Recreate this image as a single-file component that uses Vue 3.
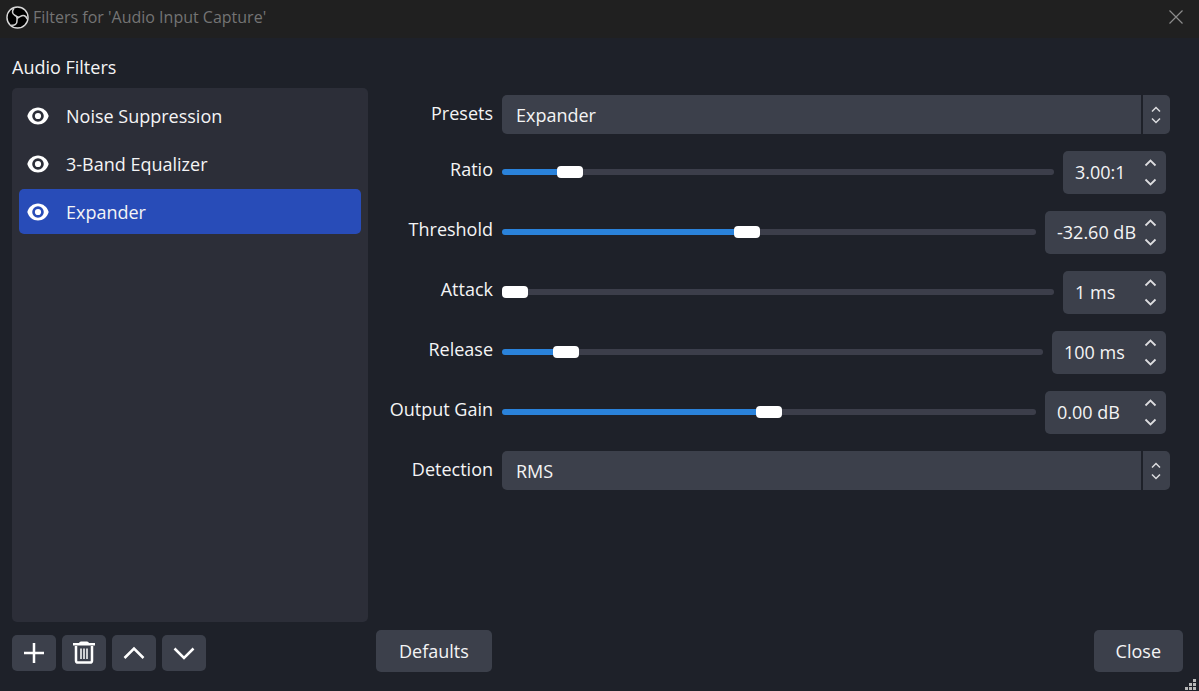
<script setup>
import { reactive, ref } from 'vue'

const filters = ['Noise Suppression', '3-Band Equalizer', 'Expander']
const selected = ref(2)
const preset = ref('Expander')
const detection = ref('RMS')

const params = reactive([
  { id: 'ratio', label: 'Ratio', min: 1, max: 20, step: 0.01, value: 3, digits: 2, unit: ':1', size: 'small' },
  { id: 'threshold', label: 'Threshold', min: -60, max: 0, step: 0.1, value: -32.6, digits: 2, unit: ' dB', size: 'large' },
  { id: 'attack', label: 'Attack', min: 1, max: 100, step: 1, value: 1, digits: 0, unit: ' ms', size: 'small' },
  { id: 'release', label: 'Release', min: 1, max: 1000, step: 1, value: 100, digits: 0, unit: ' ms', size: 'medium' },
  { id: 'gain', label: 'Output Gain', min: -32, max: 32, step: 0.1, value: 0, digits: 2, unit: ' dB', size: 'large' }
])

const fill = (p) => ((p.value - p.min) / (p.max - p.min)) * 100 + '%'
const shown = (p) => p.value.toFixed(p.digits) + p.unit
const bump = (p, dir) => {
  p.value = Math.min(p.max, Math.max(p.min, p.value + dir * p.step))
}
</script>

<template>
  <div class="dialog">
    <header class="titlebar">
      <svg class="logo" viewBox="0 0 24 24" aria-hidden="true">
        <circle cx="12" cy="12" r="11" fill="#000" stroke="#d8d8d8" stroke-width="1.5" />
        <g fill="none" stroke="#d0d0d0" stroke-width="1.6" stroke-linecap="round">
          <path d="M12 12C10.500 9.500 7 10 6.800 6.600C6.700 5 7.200 3.800 8 3" />
          <path d="M12 12C10.500 9.500 7 10 6.800 6.600C6.700 5 7.200 3.800 8 3" transform="rotate(120 12 12)" />
          <path d="M12 12C10.500 9.500 7 10 6.800 6.600C6.700 5 7.200 3.800 8 3" transform="rotate(240 12 12)" />
        </g>
        <circle cx="12" cy="12" r="1.4" fill="#d0d0d0" />
      </svg>
      <h1>Filters for 'Audio Input Capture'</h1>
      <button class="window-close" type="button" aria-label="Close window">
        <svg viewBox="0 0 14 14"><path d="M0.5 0.5L13.5 13.5M13.5 0.5L0.5 13.5" /></svg>
      </button>
    </header>

    <main class="body">
      <section class="side">
        <h2>Audio Filters</h2>
        <ul class="list">
          <li v-for="(name, i) in filters" :key="name">
            <button type="button" class="item" :class="{ active: i === selected }" @click="selected = i">
              <svg class="eye" viewBox="0 0 22 18" aria-hidden="true">
                <path fill-rule="evenodd" d="M11 0.500C16 0.500 20.300 4 21.700 9C20.300 14 16 17.500 11 17.500S1.700 14 0.300 9C1.700 4 6 0.500 11 0.500ZM11 3.200A5.800 5.800 0 1 0 11 14.800A5.800 5.800 0 1 0 11 3.200Z" />
                <circle cx="11" cy="9" r="3.100" />
              </svg>
              <span>{{ name }}</span>
            </button>
          </li>
        </ul>
        <div class="tools">
          <button type="button" aria-label="Add filter">
            <svg viewBox="0 0 24 24"><path class="line" d="M12 2V22M2 12H22" /></svg>
          </button>
          <button type="button" aria-label="Remove filter">
            <svg viewBox="0 0 24 24">
              <path class="solid" d="M1 2H7Q7.500 0.400 9 0.400H15Q16.500 0.400 17 2H23V4.600H1Z" />
              <path class="line" d="M4 5V19.500Q4 21.600 6 21.600H18Q20 21.600 20 19.500V5" />
              <path class="thin" d="M9 7.500V18M12 7.500V18M15 7.500V18" />
            </svg>
          </button>
          <button type="button" aria-label="Move up">
            <svg viewBox="0 0 24 24"><path class="line" d="M2.500 17L12 7.500L21.500 17" /></svg>
          </button>
          <button type="button" aria-label="Move down">
            <svg viewBox="0 0 24 24"><path class="line" d="M2.500 7.500L12 17L21.500 7.500" /></svg>
          </button>
        </div>
      </section>

      <section class="main">
        <form class="form" @submit.prevent>
          <div class="row">
            <label for="presets">Presets</label>
            <div class="select">
              <select id="presets" v-model="preset">
                <option>Expander</option>
                <option>Gate</option>
              </select>
              <svg viewBox="0 0 10 18" aria-hidden="true"><path d="M1 5.500L5 1.500L9 5.500M1 12.500L5 16.500L9 12.500" /></svg>
            </div>
          </div>

          <div v-for="p in params" :key="p.id" class="row">
            <label :for="p.id">{{ p.label }}</label>
            <div class="control">
              <input
                :id="p.id"
                v-model.number="p.value"
                class="slider"
                type="range"
                :min="p.min"
                :max="p.max"
                :step="p.step"
                :style="{ '--fill': fill(p) }"
              />
              <div class="spin" :class="p.size">
                <input type="text" :value="shown(p)" :aria-label="p.label + ' value'" />
                <div class="arrows">
                  <button type="button" :aria-label="'Increase ' + p.label" @click="bump(p, 1)">
                    <svg viewBox="0 0 12 8"><path d="M1 6.500L6 1.500L11 6.500" /></svg>
                  </button>
                  <button type="button" :aria-label="'Decrease ' + p.label" @click="bump(p, -1)">
                    <svg viewBox="0 0 12 8"><path d="M1 1.500L6 6.500L11 1.500" /></svg>
                  </button>
                </div>
              </div>
            </div>
          </div>

          <div class="row">
            <label for="detection">Detection</label>
            <div class="select">
              <select id="detection" v-model="detection">
                <option>RMS</option>
                <option>Peak</option>
              </select>
              <svg viewBox="0 0 10 18" aria-hidden="true"><path d="M1 5.500L5 1.500L9 5.500M1 12.500L5 16.500L9 12.500" /></svg>
            </div>
          </div>
        </form>

        <footer class="footer">
          <button type="button">Defaults</button>
          <button type="button">Close</button>
        </footer>
      </section>
    </main>

    <svg class="grip" viewBox="0 0 11 11" aria-hidden="true">
      <path d="M8 0h3v3h-3zM4 4h3v3h-3zM8 4h3v3h-3zM0 8h3v3h-3zM4 8h3v3h-3zM8 8h3v3h-3z" />
    </svg>
  </div>
</template>

<style>
body {
  margin: 0;
  background: #1e2129;
}
</style>

<style scoped>
.dialog {
  position: relative;
  display: flex;
  flex-direction: column;
  min-height: 100vh;
  background: #1e2129;
  color: #f4f4f5;
  font-family: "Open Sans", "Noto Sans", sans-serif;
  font-size: 18px;
  line-height: 24px;
}

.dialog * {
  box-sizing: border-box;
}

button,
input,
select {
  margin: 0;
  padding: 0;
  border: 0;
  color: inherit;
  font: inherit;
}

.titlebar {
  display: flex;
  align-items: center;
  height: 38px;
  padding: 0 16px 4px 6px;
  background: #202020;
}

.logo {
  width: 23px;
  height: 23px;
}

h1 {
  margin: 0 auto 0 4px;
  color: #747474;
  font-size: 16px;
  font-weight: 400;
}

.window-close {
  display: flex;
  background: none;
}

.window-close svg {
  width: 14px;
  height: 14px;
  fill: none;
  stroke: #8c8c8c;
  stroke-width: 1.2;
}

.body {
  flex: 1;
  display: grid;
  grid-template-columns: 356fr 807fr;
  column-gap: 8px;
  padding: 17px 16px 19px 12px;
}

.side,
.main {
  display: flex;
  flex-direction: column;
}

h2 {
  margin: 0 0 9px;
  font-size: 18px;
  font-weight: 400;
}

.list {
  flex: 1;
  display: flex;
  flex-direction: column;
  gap: 3px;
  margin: 0;
  padding: 5px 7px;
  border-radius: 5px;
  background: #2c2e38;
  list-style: none;
}

.item {
  display: flex;
  align-items: center;
  gap: 17px;
  width: 100%;
  height: 45px;
  padding-left: 8px;
  border-radius: 5px;
  background: none;
}

.item.active {
  background: #284cb8;
}

.eye {
  width: 22px;
  height: 18px;
  fill: #fff;
}

.tools {
  display: flex;
  gap: 6px;
  margin-top: 13px;
  padding-bottom: 1px;
}

.tools button {
  display: flex;
  align-items: center;
  justify-content: center;
  width: 44px;
  height: 36px;
  border-radius: 5px;
  background: #3c404b;
}

.tools svg {
  width: 24px;
  height: 24px;
}

.line,
.thin {
  fill: none;
  stroke: #fff;
  stroke-width: 2.5;
}

.thin {
  stroke-width: 1.5;
}

.solid {
  fill: #fff;
}

.form {
  flex: 1;
  display: flex;
  flex-direction: column;
  gap: 17px;
  padding: 40px 13px 0 0;
}

.row {
  display: grid;
  grid-template-columns: 117px 1fr;
  column-gap: 9px;
  align-items: start;
}

.row label {
  line-height: 37px;
  text-align: right;
}

.select {
  position: relative;
}

.select select {
  display: block;
  width: 100%;
  height: 39px;
  padding-left: 14px;
  appearance: none;
  border-radius: 5px;
  background: linear-gradient(#1e2129, #1e2129) right 27px top / 2px 100% no-repeat #3c404b;
}

.select svg {
  position: absolute;
  top: 11px;
  right: 9px;
  width: 10px;
  height: 18px;
  fill: none;
  stroke: #dcdcdf;
  stroke-width: 1.5;
  pointer-events: none;
}

.control {
  display: flex;
  align-items: start;
  gap: 9px;
  padding-right: 4px;
}

.slider {
  flex: 1;
  min-width: 0;
  height: 42px;
  appearance: none;
  background: none;
}

.slider::-webkit-slider-runnable-track {
  height: 6px;
  border-radius: 3px;
  background: linear-gradient(to right, #2a82da var(--fill), #3c3e4a var(--fill));
}

.slider::-webkit-slider-thumb {
  width: 26px;
  height: 12px;
  margin-top: -3px;
  appearance: none;
  border-radius: 4px;
  background: #fff;
}

.spin {
  display: flex;
  height: 43px;
  padding: 0 9px 0 12px;
  border-radius: 5px;
  background: #3c404b;
}

.spin.small {
  width: 103px;
}

.spin.medium {
  width: 114px;
}

.spin.large {
  width: 121px;
}

.spin input {
  flex: 1;
  width: 0;
  min-width: 0;
  padding-bottom: 1px;
  background: none;
}

.arrows {
  display: flex;
  flex-direction: column;
  justify-content: center;
  gap: 11px;
}

.arrows button {
  display: flex;
  background: none;
}

.arrows svg {
  width: 13px;
  height: 8px;
  fill: none;
  stroke: #dcdcdf;
  stroke-width: 1.8;
}

.footer {
  display: flex;
  justify-content: space-between;
}

.footer button {
  height: 42px;
  padding: 0 22px;
  border-radius: 5px;
  background: #3c404b;
}

.footer button:first-child {
  padding: 0 23px;
}

.grip {
  position: absolute;
  right: 3px;
  bottom: 1px;
  width: 11px;
  height: 11px;
  fill: #b8b8b8;
}
</style>
